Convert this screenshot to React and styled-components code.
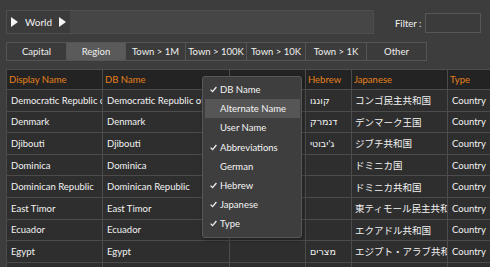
import React from "react";
import styled, { createGlobalStyle } from "styled-components";

const GlobalStyle = createGlobalStyle`
  html, body { margin: 0; padding: 0; background: #3d3d3d; overflow: hidden; }
  body { font-family: "Lato", "DejaVu Sans", "Noto Sans CJK JP", sans-serif; font-size: 9.5px; color: #f2f2f2; }
`;

const Page = styled.div`
  position: relative;
  width: 490px;
  height: 267px;
  overflow: hidden;
  padding: 10px 0 0 6px;
  box-sizing: border-box;
`;

const TopBar = styled.div`
  display: flex;
  align-items: center;
  height: 24px;
`;

const Breadcrumb = styled.div`
  width: 368px;
  height: 24px;
  box-sizing: border-box;
  background: #464646;
  border: 1px solid #4e4e4e;
  display: flex;
  align-items: stretch;
`;

const Crumb = styled.div`
  display: flex;
  align-items: center;
  gap: 7px;
  padding: 0 4px;
  background: #3b3b3b;
  width: 63px;
  box-sizing: border-box;
  font-size: 10px;
`;

const Arrow = styled.svg`
  width: 7px;
  height: 10px;
  fill: #f4f4f4;
  flex: none;
`;

const FilterGroup = styled.div`
  display: flex;
  align-items: center;
  margin-left: 21px;
  gap: 4px;
  margin-top: 2px;
`;

const FilterInput = styled.div`
  width: 56px;
  height: 20px;
  box-sizing: border-box;
  border: 1px solid #575757;
  background: #3b3b3b;
`;

const Tabs = styled.div`
  display: flex;
  margin-top: 8px;
  height: 19px;
`;

const Tab = styled.div`
  width: ${(p) => p.$w}px;
  box-sizing: border-box;
  border: 1px solid #555;
  margin-left: -1px;
  &:first-child { margin-left: 0; }
  background: ${(p) => (p.$active ? "#5a5a5a" : "#3b3b3b")};
  display: flex;
  align-items: center;
  justify-content: center;
  white-space: nowrap;
  color: #f0f0f0;
`;

const Grid = styled.div`
  margin-top: 8px;
  display: grid;
  grid-template-columns: 95px 126px 75px 45px 95px 70px;
  grid-template-rows: 19px;
  grid-auto-rows: 20.6px;
  gap: 1px;
  background: #4c4c4c;
  border-left: 1px solid #4c4c4c;
  border-top: 1px solid #4c4c4c;
  width: max-content;
`;

const HeadCell = styled.div`
  background: #232323;
  color: #e5801c;
  padding-left: 2px;
  display: flex;
  align-items: center;
  white-space: nowrap;
  overflow: hidden;
`;

const Cell = styled.div`
  background: #2e2e2e;
  color: #f2f2f2;
  padding-left: ${(p) => p.$pad ?? 4}px;
  display: flex;
  align-items: center;
  white-space: nowrap;
  overflow: hidden;
`;

const Menu = styled.div`
  position: absolute;
  left: 202px;
  top: 76px;
  width: 100px;
  box-sizing: border-box;
  padding: 3px 1px 3px 2px;
  background: #3e3e3e;
  border: 1px solid #585858;
  border-radius: 3px;
  box-shadow: 1px 2px 4px rgba(0, 0, 0, 0.35);
`;

const MenuItem = styled.div`
  height: 19.2px;
  display: flex;
  align-items: center;
  background: ${(p) => (p.$hl ? "#565656" : "transparent")};
  color: #f4f4f4;
  white-space: nowrap;
`;

const CheckSlot = styled.div`
  width: 14px;
  display: flex;
  align-items: center;
  justify-content: center;
  padding-left: 1px;
`;

const Check = () => (
  <svg width="7" height="7" viewBox="0 0 7 7">
    <path d="M0.6 3.6 L2.6 5.6 L6.4 1" fill="none" stroke="#f0f0f0" strokeWidth="1.3" />
  </svg>
);

const tabs = [
  ["Capital", 61],
  ["Region", 60, true],
  ["Town > 1M", 61],
  ["Town > 100K", 62],
  ["Town > 10K", 60],
  ["Town > 1K", 62],
  ["Other", 61],
];

const rows = [
  ["Democratic Republic of the Congo", "Democratic Republic of the Congo", "", "קונגו", "コンゴ民主共和国", "Country"],
  ["Denmark", "Denmark", "", "דנמרק", "デンマーク王国", "Country"],
  ["Djibouti", "Djibouti", "", "ג'יבוטי", "ジブチ共和国", "Country"],
  ["Dominica", "Dominica", "", "", "ドミニカ国", "Country"],
  ["Dominican Republic", "Dominican Republic", "", "", "ドミニカ共和国", "Country"],
  ["East Timor", "East Timor", "", "", "東ティモール民主共和国", "Country"],
  ["Ecuador", "Ecuador", "", "", "エクアドル共和国", "Country"],
  ["Egypt", "Egypt", "", "מצרים", "エジプト・アラブ共和国", "Country"],
  ["El Salvador", "El Salvador", "", "", "エルサルバドル共和国", "Country"],
];

const menu = [
  ["DB Name", true],
  ["Alternate Name", false, true],
  ["User Name", false],
  ["Abbreviations", true],
  ["German", false],
  ["Hebrew", true],
  ["Japanese", true],
  ["Type", true],
];

const headers = ["Display Name", "DB Name", "Abbreviations", "Hebrew", "Japanese", "Type"];

export default function App() {
  return (
    <>
      <GlobalStyle />
      <Page>
        <TopBar>
          <Breadcrumb>
            <Crumb>
              <Arrow viewBox="0 0 7 10"><path d="M0 0 L7 5 L0 10 Z" /></Arrow>
              <span>World</span>
              <Arrow viewBox="0 0 7 10"><path d="M0 0 L7 5 L0 10 Z" /></Arrow>
            </Crumb>
          </Breadcrumb>
          <FilterGroup>
            <span>Filter :</span>
            <FilterInput />
          </FilterGroup>
        </TopBar>
        <Tabs>
          {tabs.map(([t, w, a]) => (
            <Tab key={t} $w={w} $active={a}>{t}</Tab>
          ))}
        </Tabs>
        <Grid>
          {headers.map((h) => (
            <HeadCell key={h}>{h}</HeadCell>
          ))}
          {rows.map((r, i) =>
            r.map((c, j) => (
              <Cell key={i + "-" + j} $pad={j === 4 ? 3 : 4}>
                {c}
              </Cell>
            ))
          )}
        </Grid>
        <Menu>
          {menu.map(([t, c, hl]) => (
            <MenuItem key={t} $hl={hl}>
              <CheckSlot>{c ? <Check /> : null}</CheckSlot>
              {t}
            </MenuItem>
          ))}
        </Menu>
      </Page>
    </>
  );
}
